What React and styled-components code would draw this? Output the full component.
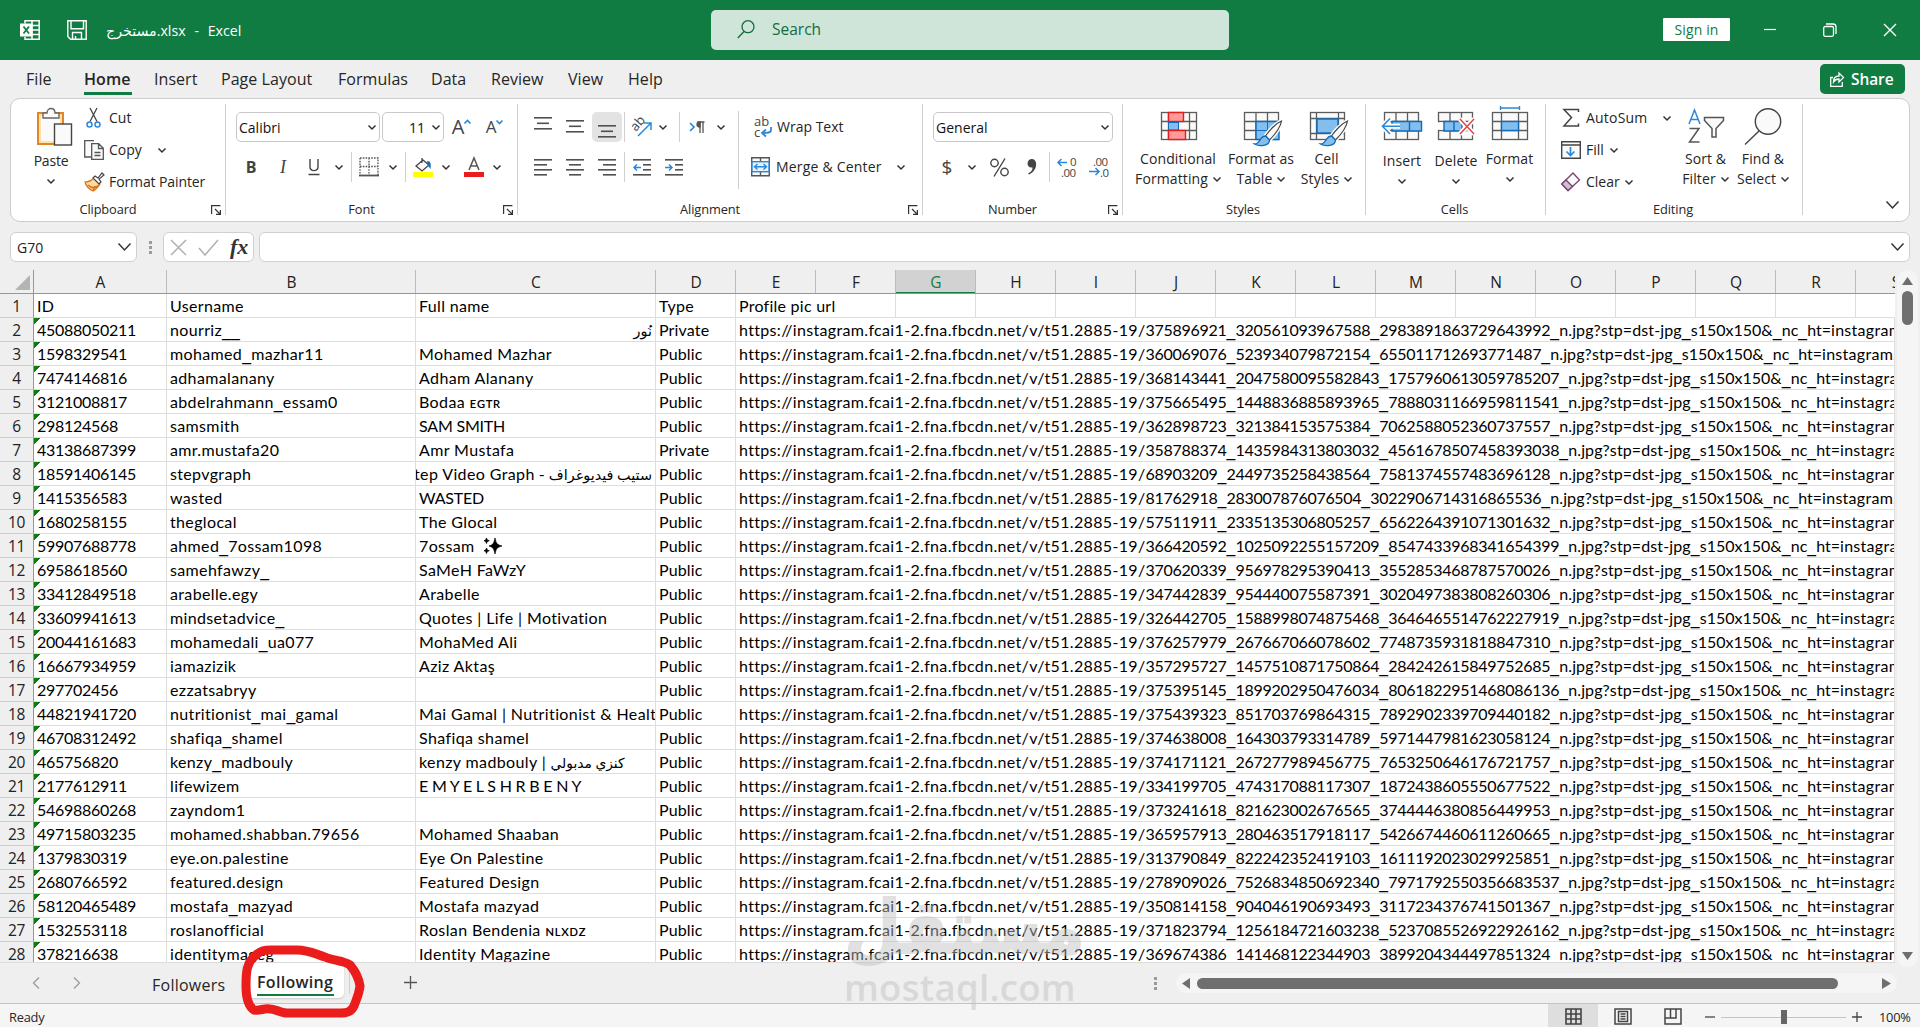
import React from "react";
import styled, { createGlobalStyle, css } from "styled-components";

const UI = `"Open Sans", "Noto Sans", "DejaVu Sans", sans-serif`;
const SHEET = `Lato, "Noto Sans", "DejaVu Sans", sans-serif`;

const GlobalStyle = createGlobalStyle`
  * {
    box-sizing: border-box;
  }

  body {
    margin: 0;
    overflow: hidden;
    background: #efefef;
    font-family: ${UI};
    font-size: 14px;
    color: #262626;
  }

  svg {
    display: block;
    flex: none;
    overflow: visible;
  }
`;

const Window = styled.div`
  position: relative;
  display: flex;
  flex-direction: column;
  width: 1920px;
  height: 1027px;
  overflow: hidden;
  background: #efefef;
`;

/* title bar */

const TitleBar = styled.header`
  display: flex;
  align-items: center;
  height: 60px;
  flex: none;
  padding-left: 20px;
  background: #107c41;
  color: #fff;
`;

const TitleIcons = styled.div`
  display: flex;
  gap: 27px;
`;

const FileName = styled.div`
  width: 605px;
  padding-left: 19px;
  font-size: 14.2px;
  white-space: pre;
  word-spacing: 0.7px;
`;

const SearchBox = styled.div`
  display: flex;
  align-items: center;
  width: 518px;
  height: 40px;
  padding: 0 0 2px 26px;
  gap: 17px;
  margin-left: 19px;
  border-radius: 5px;
  background: #cfe5da;
  color: #156b3e;
  font-size: 15.5px;
`;

const SignIn = styled.button`
  width: 67px;
  height: 23px;
  margin: 0 0 1px 434px;
  padding: 0;
  border: 0;
  border-radius: 1px;
  background: #fff;
  color: #107c41;
  font: 14px/22px ${UI};
  letter-spacing: 0.15px;
`;

const WindowButtons = styled.div`
  display: flex;
  align-items: center;
  gap: 47px;
  margin-left: 34px;
`;

/* ribbon tabs */

const TabBar = styled.nav`
  display: flex;
  align-items: flex-start;
  height: 38px;
  flex: none;
  padding: 4px 15px 0 26px;
`;

const Tab = styled.div`
  width: ${(p) => p.$w}px;
  height: 31px;
  margin-right: ${(p) => p.$gap ?? 24}px;
  font-size: 16px;
  line-height: 30px;
  letter-spacing: 0.05px;
  white-space: nowrap;
  ${(p) =>
    p.$active &&
    css`
      border-bottom: 3px solid #107c41;
      font-weight: 600;
    `}
`;

const Share = styled.button`
  display: flex;
  align-items: center;
  gap: 7px;
  width: 85px;
  height: 30px;
  margin-left: auto;
  padding: 0 0 0 10px;
  border: 0;
  border-radius: 5px;
  background: #107c41;
  color: #fff;
  font: 600 15.5px ${UI};
  letter-spacing: -0.1px;
`;

/* ribbon */

const Ribbon = styled.section`
  display: flex;
  height: 124px;
  flex: none;
  margin: 0 10px;
  padding: 5px 0;
  border: 1px solid #cdcdcd;
  border-radius: 10px;
  background: #fff;
`;

const GroupBox = styled.div`
  display: flex;
  flex-direction: column;
  width: ${(p) => p.$w}px;
  height: 111px;
  border-right: 1px solid #cfcfcf;
`;

const GroupBody = styled.div`
  display: flex;
  height: 94px;
  padding-left: ${(p) => p.$pl ?? 0}px;
`;

const Caption = styled.div`
  display: flex;
  align-items: center;
  height: 22px;
  margin-bottom: -5px;
  font-size: 12.8px;
  line-height: 22px;
  letter-spacing: -0.1px;

  span {
    flex: 1;
    padding-right: 2px;
    text-align: center;
  }

  i {
    width: 18px;
    padding: 2px 0 0 4px;
  }
`;

const Stack = styled.div`
  display: flex;
  flex-direction: column;
  width: ${(p) => p.$w}px;
  gap: 10px;
  padding-top: 8px;
`;

const SmallStack = styled.div`
  width: ${(p) => p.$w}px;
  margin: -2px 0 0 ${(p) => p.$ml ?? 0}px;
`;

const Line = styled.div`
  display: flex;
  align-items: center;
  height: ${(p) => p.$h ?? 30}px;
`;

const Tool = styled.div`
  display: flex;
  align-items: center;
  justify-content: center;
  flex: none;
  width: ${(p) => p.$w}px;
  height: 30px;
  margin-left: ${(p) => p.$ml ?? 0}px;
  border-radius: 5px;
  background: ${(p) => (p.$on ? "#e3e3e3" : "transparent")};
`;

const Rule = styled.div`
  width: 1px;
  height: ${(p) => p.$h ?? 30}px;
  margin: ${(p) => p.$mt ?? 0}px 0 0 ${(p) => p.$ml ?? 0}px;
  background: #cfcfcf;
`;

const Label = styled.div`
  width: ${(p) => p.$w}px;
  margin-left: ${(p) => p.$ml ?? 0}px;
  line-height: 20px;
  letter-spacing: ${(p) => p.$ls ?? 0}px;
  white-space: nowrap;
`;

const Combo = styled.div`
  display: flex;
  align-items: center;
  justify-content: space-between;
  width: ${(p) => p.$w}px;
  height: 30px;
  margin-right: 2px;
  padding: 0 3px 0 ${(p) => p.$pl ?? 2}px;
  border: 1px solid #c8c8c8;
  border-radius: 5px;
  color: #111;
`;

const Letter = styled.span`
  font-size: ${(p) => p.$size ?? 16}px;
  font-weight: ${(p) => p.$weight ?? 400};
  font-style: ${(p) => p.$fs ?? "normal"};
  font-family: ${(p) => p.$font ?? UI};
  line-height: 20px;
  color: #444;
`;

const BigButton = styled.div`
  display: flex;
  flex-direction: column;
  align-items: center;
  width: ${(p) => p.$w}px;
  margin-left: ${(p) => p.$ml ?? 0}px;
  line-height: 20px;
  letter-spacing: ${(p) => p.$ls ?? 0.1}px;
  white-space: nowrap;

  > div {
    display: flex;
    align-items: center;
    height: 20px;
    gap: 5px;
  }
`;

const Collapse = styled.div`
  display: flex;
  align-items: flex-end;
  margin: 0 0 7px auto;
  padding-right: 10px;
`;

/* formula bar */

const FormulaBar = styled.div`
  display: flex;
  align-items: center;
  height: 48px;
  flex: none;
  padding: 2px 10px 0;
`;

const Field = styled.div`
  display: flex;
  align-items: center;
  justify-content: ${(p) => p.$justify ?? "space-between"};
  ${(p) => (p.$w ? `width: ${p.$w}px;` : "flex: 1; margin-left: 5px;")}
  height: 30px;
  padding: 0 5px 0 6px;
  border: 1px solid #d0d0d0;
  border-radius: 6px;
  background: #fff;
  color: #222;
`;

const Dots = styled.div`
  width: 3px;
  height: 13px;
  margin: 0 ${(p) => p.$mr ?? 11}px 0 12px;
  background: repeating-linear-gradient(#9a9a9a 0 3px, transparent 3px 5px);
`;

/* sheet */

const Sheet = styled.main`
  display: flex;
  height: 693px;
  flex: none;
`;

const Grid = styled.div`
  width: 1895px;
  height: 693px;
  overflow: hidden;
  border-bottom: 1px solid #dcdcdc;
  background: #efefef;
`;

const HeadRow = styled.div`
  display: flex;
  width: 1895px;
  height: 24px;
  overflow: hidden;
  border-bottom: 1px solid #979797;
`;

const Corner = styled.div`
  width: 34px;
  flex: none;
  padding: 5px 0 0 15px;
  border-right: 1px solid #979797;
`;

const ColHead = styled.div`
  width: ${(p) => p.$w}px;
  height: 24px;
  flex: none;
  padding-left: 1px;
  border-right: 1px solid #bcbcbc;
  text-align: center;
  font-size: 15.5px;
  line-height: 24px;
  color: #222;
  ${(p) =>
    p.$selected &&
    css`
      background: #d2d2d2;
      color: #107c41;
      box-shadow: inset 0 -2px #107c41;
    `}
`;

const DataRow = styled.div`
  display: flex;
  width: 1895px;
  height: 24px;
`;

const RowHead = styled.div`
  width: 34px;
  flex: none;
  border-right: 1px solid #979797;
  border-bottom: 1px solid #cdcdcd;
  text-align: center;
  font-size: 15.5px;
  line-height: 24px;
  letter-spacing: -0.3px;
  color: #222;
`;

const Cell = styled.div`
  width: ${(p) => p.$w}px;
  height: 24px;
  flex: none;
  overflow: hidden;
  padding: 0 3px;
  border-right: 1px solid #dedede;
  border-bottom: 1px solid #dedede;
  background: #fff;
  color: #000;
  font-family: ${SHEET};
  font-size: 16px;
  line-height: 24px;
  letter-spacing: ${(p) => p.$ls ?? 0.35}px;
  white-space: pre;
  ${(p) =>
    p.$flag &&
    css`
      background: linear-gradient(135deg, #0b7d0b 4.6px, #fff 4.7px);
    `}
  ${(p) =>
    p.$spark &&
    css`
      display: flex;
      align-items: center;
      gap: 9px;
    `}
`;

const Arabic = styled.span`
  font-size: ${(p) => p.$size}px;
  letter-spacing: 0;
`;

/* underscore as wide as a digit */
const Under = styled.span`
  font-family: "DejaVu Sans", sans-serif;
  font-size: 17.5px;
  line-height: 0;
  letter-spacing: 0.25px;
`;

const VScroll = styled.div`
  display: flex;
  flex-direction: column;
  align-items: center;
  width: 21px;
  height: 697px;
  margin-left: 2px;
  padding: 7px 0;
  border-radius: 10px;
  background: #f5f5f5;
`;

const VThumb = styled.div`
  width: 11px;
  height: 34px;
  margin: 6px 0 auto;
  border-radius: 6px;
  background: #6f6f6f;
`;

const HThumb = styled(VThumb)`
  width: 641px;
  height: 11px;
  margin: 0 auto 0 7px;
`;

/* sheet tabs */

const SheetBar = styled.div`
  display: flex;
  align-items: center;
  height: 41px;
  flex: none;
  padding: 0 23px 0 32px;
  border-bottom: 1px solid #c4c4c4;
`;

const SheetTab = styled.div`
  height: 35px;
  margin: 0 0 6px ${(p) => p.$ml}px;
  padding: 0 10px 0 14px;
  font-size: 16px;
  line-height: ${(p) => (p.$active ? 38 : 44)}px;
  ${(p) =>
    p.$active &&
    css`
      width: 101px;
      border-radius: 0 0 5px 5px;
      background: #fff;
      box-shadow: 0 1px 2px #c8c8c8;
      font-weight: 600;
    `}

  span {
    display: block;
    height: 33px;
    width: ${(p) => p.$tw}px;
    letter-spacing: ${(p) => p.$ls}px;
    border-bottom: ${(p) => (p.$active ? "2px solid #107c41" : "0")};
  }
`;

const AddSheet = styled.div`
  margin: 0 auto 2px 54px;
`;

const HScroll = styled.div`
  display: flex;
  align-items: center;
  justify-content: space-between;
  width: 721px;
  height: 20px;
  padding: 0 6px;
  border-radius: 10px;
  background: #f5f5f5;
`;

const StatusBar = styled.footer`
  display: flex;
  align-items: center;
  height: 23px;
  flex: none;
  padding-left: 9px;
  background: #f5f5f5;
  font-size: 12.8px;
  letter-spacing: -0.2px;

  > span {
    padding-top: 3px;
  }
`;

const StatusViews = styled.div`
  display: flex;
  align-items: center;
  margin-left: auto;
  padding-right: 10px;
`;

const View = styled.div`
  display: flex;
  justify-content: center;
  align-items: center;
  width: 50px;
  height: 23px;
  padding-top: 2px;
  background: ${(p) => (p.$on ? "#dedede" : "transparent")};
`;

const ZoomOut = styled.div`
  padding: 2px 0 0 7px;
`;

const ZoomTrack = styled.div`
  display: flex;
  align-items: center;
  justify-content: center;
  width: 125px;
  height: 23px;
  margin: 0 6px;
  background: linear-gradient(#c4c4c4, #c4c4c4) 0 13px / 125px 1px no-repeat;
`;

const ZoomText = styled.div`
  width: 31px;
  margin-left: 17px;
  padding-top: 3px;
`;

const Overlay = styled.svg`
  position: absolute;
  left: 236px;
  top: 940px;
`;

const Watermark = styled.div`
  position: absolute;
  left: 844px;
  top: 880px;
  width: 230px;
  height: 130px;
  color: #bebebe;
  opacity: 0.45;
  white-space: nowrap;
`;

const MarkArabic = styled.div`
  width: max-content;
  font: bold 74px/94px "DejaVu Sans", sans-serif;
  -webkit-text-stroke: 2px #bebebe;
  transform: scaleX(0.89);
  transform-origin: 0 0;
`;

const MarkLatin = styled.div`
  margin-top: -7px;
  font: 600 36.5px/40px ${UI};
  letter-spacing: 0.3px;
`;

const Chevron = ({ w = 8, h = 4 }) => (
  <svg width={w} height={h + 1} fill="none" stroke="#333" strokeWidth="1.5">
    <path d={`M0.5 0.5 L${w / 2} ${h} L${w - 0.5} 0.5`} />
  </svg>
);

const Launcher = () => (
  <svg width="10" height="10" fill="none" stroke="#333" strokeWidth="1.2">
    <path d="M0.6 9V0.6H9.4M4 4l5 5M9.4 5v4.4H5" />
  </svg>
);

/* horizontal bars; each entry is [x, y, width] */
const Bars = ({ bars, h = 18, children }) => (
  <svg width="18" height={h}>
    {bars.map(([x, y, w]) => (
      <rect key={y} x={x} y={y} width={w} height="1.6" fill="#505050" />
    ))}
    {children}
  </svg>
);

const Group = ({ title, w, pl, launcher, children }) => (
  <GroupBox $w={w}>
    <GroupBody $pl={pl}>{children}</GroupBody>
    <Caption>
      <span>{title}</span>
      {launcher && (
        <i>
          <Launcher />
        </i>
      )}
    </Caption>
  </GroupBox>
);

const Brush = ({ x, y }) => (
  <g transform={`translate(${x} ${y})`}>
    <path d="M27 0c-5 2-12 9-16 15l4 4c5-5 11-13 12-19z" fill="#fff" stroke="#fff" strokeWidth="4" />
    <path d="M27 0c-5 2-12 9-16 15l4 4c5-5 11-13 12-19z" fill="#fafafa" stroke="#444" strokeWidth="1.2" />
    <path d="M11 15c-6 0-5 8-11 8 5 3 15 2 15-4z" fill="#83beec" stroke="#0f6cbd" strokeWidth="1.3" />
  </g>
);

const TableGrid = ({ x, y, w, h, cols, rows }) => (
  <g fill="none" stroke="#5c5c5c" strokeWidth="1.3">
    <rect x={x} y={y} width={w} height={h} fill="#fafafa" />
    {cols.map((c) => (
      <path key={c} d={`M${x + c} ${y}v${h}`} />
    ))}
    {rows.map((r) => (
      <path key={r} d={`M${x} ${y + r}h${w}`} />
    ))}
  </g>
);

const Clipboard = () => (
  <Group title="Clipboard" w={215} launcher>
    <BigButton $w={40} $ml={20} $ls={-0.2}>
      <svg width="28" height="47" fill="none" strokeWidth="1.4">
        <rect x="1" y="9" width="25" height="31" fill="#ffe2a8" stroke="#e0852a" strokeWidth="2" />
        <rect x="4" y="12" width="19" height="25" fill="#fafafa" />
        <path d="M6 14V9h4c0-6 8-6 8 0h4v5z" fill="#fafafa" stroke="#666" />
        <rect x="17.500" y="20" width="17" height="21" fill="#fafafa" stroke="#444" />
      </svg>
      <div>Paste</div>
      <div>
        <Chevron />
      </div>
    </BigButton>
    <SmallStack $w={130} $ml={13}>
      <Line $h={32}>
        <svg width="20" height="20" fill="none" strokeWidth="1.3">
          <path d="M6 0l7 13.500M13 0L6 13.500" stroke="#444" />
          <circle cx="5.500" cy="16.500" r="2.500" stroke="#2b88d8" strokeWidth="1.5" />
          <circle cx="13.500" cy="16.500" r="2.500" stroke="#2b88d8" strokeWidth="1.5" />
        </svg>
        <Label $ml={5}>Cut</Label>
      </Line>
      <Line $h={32}>
        <svg width="20" height="20" fill="#fafafa" stroke="#555" strokeWidth="1.3">
          <path d="M7 17H0.700V0.700H10" />
          <path d="M7.700 3.700h7l4.600 4.600v11h-11.600zM14.500 4v4.500H19M10.500 12.500h6M10.500 15.500h6" />
        </svg>
        <Label $ml={5} $w={49}>
          Copy
        </Label>
        <Chevron />
      </Line>
      <Line $h={32}>
        <svg width="20" height="20" strokeWidth="1.2">
          <path d="M1 10c3 0 6-1 9-4l6 6c-2 3-4 6-7 7-4-2-7-5-8-9z" fill="#fcd9a0" stroke="#d9731a" />
          <path d="M4 13c3 3 8 4 11 0M9 19l2-5" fill="none" stroke="#d9731a" strokeWidth="1.6" />
          <path d="M9 6l2-2 3 2 4-5 2 2-5 4 2 3-2 2z" fill="#fafafa" stroke="#444" />
        </svg>
        <Label $ml={5} $ls={-0.1}>
          Format Painter
        </Label>
      </Line>
    </SmallStack>
  </Group>
);

const FontGroup = () => (
  <Group title="Font" w={292} pl={10} launcher>
    <Stack>
      <Line>
        <Combo $w={144}>
          Calibri
          <Chevron />
        </Combo>
        <Combo $w={62} $pl={26}>
          11
          <Chevron />
        </Combo>
        <Tool $w={21} $ml={5}>
          <Letter $size={20}>A</Letter>
          <svg width="7" height="22" fill="none" stroke="#2b88d8" strokeWidth="1.6">
            <path d="M0.500 7.500l3-3 3 3" />
          </svg>
        </Tool>
        <Tool $w={19} $ml={13}>
          <Letter $size={17}>A</Letter>
          <svg width="7" height="22" fill="none" stroke="#2b88d8" strokeWidth="1.6">
            <path d="M0.500 4.500l3 3 3-3" />
          </svg>
        </Tool>
      </Line>
      <Line>
        <Tool $w={14} $ml={8}>
          <Letter $weight={700}>B</Letter>
        </Tool>
        <Tool $w={14} $ml={18}>
          <Letter $fs="italic" $size={18} $font={`"Liberation Serif", serif`}>
            I
          </Letter>
        </Tool>
        <Tool $w={14} $ml={17}>
          <svg width="12" height="18" fill="none" stroke="#444" strokeWidth="1.4">
            <path d="M2 1v7.500c0 5.500 8 5.500 8 0V1M0.500 16.500h11" />
          </svg>
        </Tool>
        <Tool $w={8} $ml={14}>
          <Chevron />
        </Tool>
        <Rule $ml={8} />
        <Tool $w={20} $ml={7}>
          <svg width="20" height="20" fill="none" stroke="#555" strokeWidth="1.3">
            <path d="M1 1h18v17M1 1v17M10 1v17M1 9.500h18" strokeDasharray="1.6 1.2" />
            <path d="M0 18.500h20" strokeWidth="1.8" />
          </svg>
        </Tool>
        <Tool $w={8} $ml={10}>
          <Chevron />
        </Tool>
        <Rule $ml={8} />
        <Tool $w={20} $ml={7}>
          <svg width="20" height="20">
            <path d="M9 1v5M10 3l6 5-7 6-6-5z" fill="#fafafa" stroke="#444" strokeWidth="1.3" />
            <path d="M14 4c4 0 4 3 3.500 8l-3-4z" fill="#0f6cbd" />
            <rect y="15" width="20" height="5" fill="#ffff00" />
          </svg>
        </Tool>
        <Tool $w={8} $ml={9}>
          <Chevron />
        </Tool>
        <Tool $w={20} $ml={14}>
          <svg width="20" height="20">
            <path d="M5 13L10 1l5 12M6.500 9h7" fill="none" stroke="#555" strokeWidth="1.5" />
            <rect y="15" width="20" height="5" fill="#ea1c1c" />
          </svg>
        </Tool>
        <Tool $w={8} $ml={9}>
          <Chevron />
        </Tool>
      </Line>
    </Stack>
  </Group>
);

const Alignment = () => (
  <Group title="Alignment" w={405} pl={14} launcher>
    <Stack $w={206}>
      <Line>
        <Tool $w={22}>
          <Bars bars={[[0, 0, 18], [3, 5.500, 12], [0, 11, 18]]} h={20} />
        </Tool>
        <Tool $w={22} $ml={10}>
          <Bars bars={[[0, 3, 18], [3, 8.500, 12], [0, 14, 18]]} h={20} />
        </Tool>
        <Tool $w={30} $ml={6} $on>
          <Bars bars={[[0, 8, 18], [3, 13.500, 12], [0, 19, 18]]} h={20} />
        </Tool>
        <Rule $ml={2} />
        <Tool $w={22} $ml={6}>
          <svg width="22" height="20">
            <text x="0" y="0" transform="translate(5 15) rotate(-50)" fontSize="13" fill="#444">
              ab
            </text>
            <path d="M7 19L20 6M13 6h7v7" fill="none" stroke="#2b88d8" strokeWidth="1.5" />
          </svg>
        </Tool>
        <Tool $w={8} $ml={6}>
          <Chevron />
        </Tool>
        <Rule $ml={12} />
        <Tool $w={16} $ml={9}>
          <svg width="16" height="14" fill="none" stroke="#555" strokeWidth="1.3">
            <path d="M1 3l4 4-4 4" stroke="#2b88d8" strokeWidth="1.7" />
            <path d="M8.500 2h7M11 2v11M14 2v11" />
            <path d="M11 2c-4 0-4 5 0 5z" fill="#555" />
          </svg>
        </Tool>
        <Tool $w={8} $ml={12}>
          <Chevron />
        </Tool>
      </Line>
      <Line>
        <Tool $w={22}>
          <Bars bars={[[0, 0, 18], [0, 5, 13], [0, 10, 18], [0, 15, 13]]} h={17} />
        </Tool>
        <Tool $w={22} $ml={10}>
          <Bars bars={[[0, 0, 18], [3, 5, 12], [0, 10, 18], [3, 15, 12]]} h={17} />
        </Tool>
        <Tool $w={22} $ml={10}>
          <Bars bars={[[0, 0, 18], [5, 5, 13], [0, 10, 18], [5, 15, 13]]} h={17} />
        </Tool>
        <Rule $ml={6} />
        <Tool $w={20} $ml={7}>
          <Bars bars={[[0, 0, 18], [10, 5, 8], [10, 10, 8], [0, 15, 18]]} h={17}>
            <path d="M8 8.500H1M4 5.500l-3 3 3 3" fill="none" stroke="#2b88d8" strokeWidth="1.5" />
          </Bars>
        </Tool>
        <Tool $w={20} $ml={12}>
          <Bars bars={[[0, 0, 18], [10, 5, 8], [10, 10, 8], [0, 15, 18]]} h={17}>
            <path d="M0 8.500h7M4 5.500l3 3-3 3" fill="none" stroke="#2b88d8" strokeWidth="1.5" />
          </Bars>
        </Tool>
      </Line>
    </Stack>
    <Rule $h={78} $mt={7} />
    <Stack>
      <Line>
        <Tool $w={20} $ml={14}>
          <svg width="18" height="22" fill="#444" fontSize="13">
            <text x="0" y="10">
              ab
            </text>
            <text x="0" y="21">
              c
            </text>
            <path d="M17 11v3c0 3-4 3-8 3M12 13.500l-4 3.500 4 3.500" fill="none" stroke="#2b88d8" strokeWidth="1.8" />
          </svg>
        </Tool>
        <Label $ml={4}>Wrap Text</Label>
      </Line>
      <Line>
        <Tool $w={20} $ml={11}>
          <svg width="19" height="20" fill="#fafafa" stroke="#555" strokeWidth="1.4">
            <path d="M0.700 0.700h17.600v18H0.700zM9.500 0.700v18" />
            <rect x="1" y="4.700" width="17" height="10" fill="#e6f2fb" stroke="#2b88d8" />
            <path d="M3.500 9.700h12M6.500 7l-3 2.700 3 2.700M12.500 7l3 2.700-3 2.700" fill="none" stroke="#2b88d8" />
          </svg>
        </Tool>
        <Label $ml={6} $w={121} $ls={0.2}>
          Merge &amp; Center
        </Label>
        <Chevron />
      </Line>
    </Stack>
  </Group>
);

const NumberGroup = () => (
  <Group title="Number" w={200} pl={10} launcher>
    <Stack>
      <Line>
        <Combo $w={180}>
          General
          <Chevron />
        </Combo>
      </Line>
      <Line>
        <Tool $w={12} $ml={8}>
          <Letter $size={19}>$</Letter>
        </Tool>
        <Tool $w={8} $ml={15}>
          <Chevron />
        </Tool>
        <Tool $w={20} $ml={13}>
          <svg width="19" height="19" fill="none" stroke="#444" strokeWidth="1.4">
            <circle cx="4.500" cy="5" r="3.700" />
            <circle cx="14.500" cy="14" r="3.700" />
            <path d="M15 0.500L4 18.500" />
          </svg>
        </Tool>
        <Tool $w={10} $ml={18}>
          <svg width="10" height="17" fill="#444">
            <path d="M5 0c6 0 6 12-3 15.500l-1-1c4-2 4.500-4 4.500-6C-1 9.500-1 0 5 0z" />
          </svg>
        </Tool>
        <Rule $ml={12} />
        <Tool $w={20} $ml={7}>
          <svg width="20" height="20" fontSize="11.500" fill="#444" letterSpacing="-0.5">
            <path d="M10 5.500H1M4.500 2L1 5.500 4.500 9" fill="none" stroke="#2b88d8" strokeWidth="1.5" />
            <text x="13" y="9">
              0
            </text>
            <text x="4" y="20">
              .00
            </text>
          </svg>
        </Tool>
        <Tool $w={20} $ml={12}>
          <svg width="20" height="20" fontSize="11.500" fill="#444" letterSpacing="-0.5">
            <text x="4" y="9">
              .00
            </text>
            <path d="M0 14.500h10M6.500 11l3.500 3.500L6.500 18" fill="none" stroke="#2b88d8" strokeWidth="1.5" />
            <text x="11" y="20">
              .0
            </text>
          </svg>
        </Tool>
      </Line>
    </Stack>
  </Group>
);

const Styles = () => (
  <Group title="Styles" w={243} pl={9}>
    <BigButton $w={92}>
      <svg width="34" height="45">
        <TableGrid x={0.5} y={8.5} w={35} h={27} cols={[7, 28]} rows={[9, 18]} />
        <rect x="7.500" y="8.500" width="15" height="9" fill="#ff9a9a" stroke="#e31b1b" strokeWidth="1.4" />
        <rect x="7.500" y="18.500" width="10" height="7.500" fill="#83beec" stroke="#0f6cbd" />
        <rect x="7.500" y="26.500" width="17" height="9" fill="#ff9a9a" stroke="#e31b1b" strokeWidth="1.4" />
      </svg>
      <div>Conditional</div>
      <div>
        Formatting <Chevron />
      </div>
    </BigButton>
    <BigButton $w={74}>
      <svg width="34" height="45">
        <TableGrid x={0.5} y={8.5} w={34} h={27} cols={[11.5, 23]} rows={[9, 18]} />
        <path d="M12 17.500h23v18H12z" fill="#83beec" stroke="#0f6cbd" strokeWidth="1.4" />
        <path d="M12 26.500h23M23.500 17.500v18" stroke="#0f6cbd" />
        <Brush x={10.5} y={17} />
      </svg>
      <div>Format as</div>
      <div>
        Table <Chevron />
      </div>
    </BigButton>
    <BigButton $w={57}>
      <svg width="34" height="45">
        <TableGrid x={0.5} y={8.5} w={34} h={27} cols={[6, 28]} rows={[6, 21]} />
        <rect x="7" y="15" width="21" height="14" fill="#83beec" stroke="#0f6cbd" strokeWidth="1.4" />
        <Brush x={10.5} y={17} />
      </svg>
      <div>Cell</div>
      <div>
        Styles <Chevron />
      </div>
    </BigButton>
  </Group>
);

const Cells = () => (
  <Group title="Cells" w={180} pl={11}>
    <BigButton $w={50}>
      <svg width="36" height="47">
        <TableGrid x={0.5} y={8.5} w={34} h={27} cols={[11.5, 23]} rows={[9, 18]} />
        <path d="M8 17.500h29.500v9.500H8zM25.500 17.500v9.500" fill="#83beec" stroke="#0f6cbd" strokeWidth="1.4" />
        <path d="M16 22.300H-1M6 14.500l-7.500 7.800L6 30" fill="none" stroke="#fff" strokeWidth="5" />
        <path d="M16 22.300H-1M6 14.500l-7.500 7.800L6 30" fill="none" stroke="#2b88d8" strokeWidth="1.6" />
      </svg>
      <div>Insert</div>
      <div>
        <Chevron />
      </div>
    </BigButton>
    <BigButton $w={58}>
      <svg width="36" height="47">
        <TableGrid x={0.5} y={8.5} w={34} h={27} cols={[11.5, 23]} rows={[9, 18]} />
        <path d="M-1 18.300h6v7.500h-6z" fill="#fff" />
        <path d="M6 17.500h18v9.500H6zM16 17.500v9.500" fill="#83beec" stroke="#0f6cbd" strokeWidth="1.4" />
        <path d="M22 15l14 15M36 15L22 30" stroke="#fff" strokeWidth="5" />
        <path d="M22 15l14 15M36 15L22 30" stroke="#e8423f" strokeWidth="1.5" />
      </svg>
      <div>Delete</div>
      <div>
        <Chevron />
      </div>
    </BigButton>
    <BigButton $w={49}>
      <svg width="36" height="45">
        <TableGrid x={0.5} y={8.5} w={35} h={27} cols={[9, 26]} rows={[9, 18]} />
        <rect x="9.500" y="17.500" width="17" height="9" fill="#83beec" stroke="#0f6cbd" strokeWidth="1.4" />
        <path d="M8.500 4h19M8.500 2v4M27.500 2v4" stroke="#2b88d8" strokeWidth="1.4" />
      </svg>
      <div>Format</div>
      <div>
        <Chevron />
      </div>
    </BigButton>
  </Group>
);

const Editing = () => (
  <Group title="Editing" w={257} pl={15}>
    <SmallStack $w={119}>
      <Line $h={32}>
        <svg width="20" height="20" fill="none" stroke="#444" strokeWidth="1.5">
          <path d="M17.500 4V1.500H3l7.500 8L3 18h14.500v-2.500" />
        </svg>
        <Label $ml={5} $w={77} $ls={0.2}>
          AutoSum
        </Label>
        <Chevron />
      </Line>
      <Line $h={32}>
        <svg width="20" height="18" fill="#fafafa" stroke="#444" strokeWidth="1.4">
          <path d="M0.700 0.700h18.600v16.600H0.700zM0.700 4h18.600" />
          <path d="M9.500 6v8.500M5.500 10.500l4 4 4-4" fill="none" stroke="#2b88d8" strokeWidth="1.7" />
        </svg>
        <Label $ml={5} $w={24}>
          Fill
        </Label>
        <Chevron />
      </Line>
      <Line $h={32}>
        <svg width="20" height="20" fill="#fafafa" stroke="#7b3f73" strokeWidth="1.3">
          <path d="M12 1l6.500 7L7 18.500 0.800 12z" />
          <path d="M5 8l6.500 6.500L7 18.500 0.800 12z" fill="#c9c3c8" />
        </svg>
        <Label $ml={5} $w={39}>
          Clear
        </Label>
        <Chevron />
      </Line>
    </SmallStack>
    <BigButton $w={51}>
      <svg width="34" height="45" fill="none" strokeWidth="1.5">
        <path d="M0 20L5.500 6 11 20M2 15.500h7" stroke="#2b88d8" />
        <path d="M0.500 24.500h9.500L0.500 38h10" stroke="#555" />
        <path d="M15.500 13.500h19v3l-7.500 8v8.500h-4v-8.500l-7.500-8z" fill="#fafafa" stroke="#555" />
      </svg>
      <div>Sort &amp;</div>
      <div>
        Filter <Chevron />
      </div>
    </BigButton>
    <BigButton $w={58} $ml={3}>
      <svg width="38" height="45" fill="#fafafa" stroke="#444" strokeWidth="1.4">
        <circle cx="24" cy="17.500" r="12.700" />
        <path d="M15 27L1 40.500" />
      </svg>
      <div>Find &amp;</div>
      <div>
        Select <Chevron />
      </div>
    </BigButton>
  </Group>
);

const columns = [
  ["A", 133], ["B", 249], ["C", 240], ["D", 80], ["E", 80], ["F", 80],
  ["G", 80], ["H", 80], ["I", 80], ["J", 80], ["K", 80], ["L", 80],
  ["M", 80], ["N", 80], ["O", 80], ["P", 80], ["Q", 80], ["R", 80], ["S", 80],
];

const rows = [
  ["45088050211", "nourriz__", "نُور", "Private", "375896921_320561093967588_2983891863729643992"],
  ["1598329541", "mohamed_mazhar11", "Mohamed Mazhar", "Public", "360069076_523934079872154_655011712693771487"],
  ["7474146816", "adhamalanany", "Adham Alanany", "Public", "368143441_2047580095582843_1757960613059785207"],
  ["3121008817", "abdelrahmann_essam0", "Bodaa ᴇɢᴛʀ", "Public", "375665495_1448836885893965_7888031166959811541"],
  ["298124568", "samsmith", "SAM SMITH", "Public", "362898723_321384153575384_7062588052360737557"],
  ["43138687399", "amr.mustafa20", "Amr Mustafa", "Private", "358788374_1435984313803032_4561678507458393038"],
  ["18591406145", "stepvgraph", "ستيب فيديوغراف - Step Video Graph", "Public", "68903209_2449735258438564_7581374557483696128"],
  ["1415356583", "wasted", "WASTED", "Public", "81762918_283007876076504_3022906714316865536"],
  ["1680258155", "theglocal", "The Glocal", "Public", "57511911_2335135306805257_6562264391071301632"],
  ["59907688778", "ahmed_7ossam1098", "7ossam", "Public", "366420592_1025092255157209_8547433968341654399"],
  ["6958618560", "samehfawzy_", "SaMeH FaWzY", "Public", "370620339_956978295390413_3552853468787570026"],
  ["33412849518", "arabelle.egy", "Arabelle", "Public", "347442839_954440075587391_3020497383808260306"],
  ["33609941613", "mindsetadvice_", "Quotes | Life | Motivation", "Public", "326442705_1588998074875468_3646465514762227919"],
  ["20044161683", "mohamedali_ua077", "MohaMed Ali", "Public", "376257979_267667066078602_7748735931818847310"],
  ["16667934959", "iamazizik", "Aziz Aktaş", "Public", "357295727_1457510871750864_284242615849752685"],
  ["297702456", "ezzatsabryy", "", "Public", "375395145_1899202950476034_8061822951468086136"],
  ["44821941720", "nutritionist_mai_gamal", "Mai Gamal | Nutritionist & Health", "Public", "375439323_851703769864315_7892902339709440182"],
  ["46708312492", "shafiqa_shamel", "Shafiqa shamel", "Public", "374638008_164303793314789_5971447981623058124"],
  ["465756820", "kenzy_madbouly", "kenzy madbouly | كنزي مدبولي", "Public", "374171121_267277989456775_7653250646176721757"],
  ["2177612911", "lifewizem", "E M Y E L S H R B E N Y", "Public", "334199705_474317088117307_1872438605550677522"],
  ["54698860268", "zayndom1", "", "Public", "373241618_821623002676565_3744446380856449953"],
  ["49715803235", "mohamed.shabban.79656", "Mohamed Shaaban", "Public", "365957913_280463517918117_5426674460611260665"],
  ["1379830319", "eye.on.palestine", "Eye On Palestine", "Public", "313790849_822242352419103_1611192023029925851"],
  ["2680766592", "featured.design", "Featured Design", "Public", "278909026_7526834850692340_7971792550356683537"],
  ["58120465489", "mostafa_mazyad", "Mostafa mazyad", "Public", "350814158_904046190693493_3117234376741501367"],
  ["1532553118", "roslanofficial", "Roslan Bendenia ɴʟxᴅᴢ", "Public", "371823794_1256184721603238_5237085526922926162"],
  ["378216638", "identitymageg", "Identity Magazine", "Public", "369674386_141468122344903_3899204344497851324"],
];

const isArabic = (text) => /^[\u0600-\u06ff]/.test(text);
const isCaps = (text) => /^[A-Z ]+$/.test(text);

const Spaced = ({ text }) =>
  text.split(/(_)/).map((part, i) => (part === "_" ? <Under key={i}>_</Under> : part));

/* Arabic runs are set a little smaller than the Latin ones */
const Name = ({ text }) =>
  text
    .split(/([\u0600-\u06ff][\u0600-\u06ff ]*[\u0600-\u06ff])/)
    .map((part, i) =>
      isArabic(part) ? (
        <Arabic key={i} $size={text.startsWith("kenzy") ? 13.8 : 14.4}>
          {part}
        </Arabic>
      ) : (
        part
      )
    );

const ctx = document.createElement("canvas").getContext("2d");

/* spreads a run of text over a given width */
function Run({ text, width }) {
  ctx.font = "16px Lato";
  const spacing = (width - ctx.measureText(text).width) / text.length;
  return <span style={{ letterSpacing: `${spacing}px` }}>{text}</span>;
}

const Url = ({ pic }) => (
  <>
    <Run text="https://instagram.fcai1-2.fna.fbcdn.net/v/t51.2885-19/" width={406} />
    {pic.split(/(_)/).map((part, i) =>
      part === "_" ? <Under key={i}>_</Under> : <Run key={i} text={part} width={part.length * 8.993} />
    )}
    <Under>_</Under>
    <Run text="n.jpg?stp=dst-jpg" width={122.5} />
    <Under>_</Under>
    <Run text="s150x150&" width={82} />
    <Under>_</Under>
    <Run text="nc" width={16.6} />
    <Under>_</Under>
    <Run text="ht=" width={23.7} />
    <Run text="instagram.f" width={81} />
  </>
);

const Sparkles = () => (
  <svg width="18" height="18">
    <path d="M11 1c1 5 2 7 7 8-5 1-6 3-7 8-1-5-2-7-6-8 4-1 5-3 6-8zM2.500 1l.8 2 2 .7-2 .8-.8 2-.8-2L0 3.700 1.700 3zM2.500 11l.8 2 2 .7-2 .8-.8 2-.8-2-1.700-.8 1.700-.7z" fill="#000" stroke="#000" strokeWidth="0.7" />
  </svg>
);

function SheetGrid() {
  return (
    <Grid>
      <HeadRow>
        <Corner>
          <svg width="15" height="15">
            <path d="M15 0v15H0z" fill="#b4b4b4" />
          </svg>
        </Corner>
        {columns.map(([name, w]) => (
          <ColHead key={name} $w={w} $selected={name === "G"}>
            {name}
          </ColHead>
        ))}
      </HeadRow>
      <DataRow>
        <RowHead>1</RowHead>
        <Cell $w={133}>ID</Cell>
        <Cell $w={249}>Username</Cell>
        <Cell $w={240}>Full name</Cell>
        <Cell $w={80}>Type</Cell>
        <Cell $w={160} $ls={0.25}>Profile pic url</Cell>
        {columns.slice(6).map(([name, w]) => (
          <Cell key={name} $w={w} />
        ))}
      </DataRow>
      {rows.map(([id, username, fullName, type, pic], i) => (
        <DataRow key={id}>
          <RowHead>{i + 2}</RowHead>
          <Cell $w={133} $ls={-0.28} $flag>
            {id}
          </Cell>
          <Cell $w={249}>
            <Spaced text={username} />
          </Cell>
          <Cell
            $w={240}
            $ls={isCaps(fullName) ? -0.2 : 0.38}
            $spark={fullName === "7ossam"}
            dir={isArabic(fullName) ? "rtl" : "ltr"}
          >
            <Name text={fullName} />
            {fullName === "7ossam" && <Sparkles />}
          </Cell>
          <Cell $w={80} $ls={0.15}>
            {type}
          </Cell>
          <Cell $w={1159}>
            <Url pic={pic} />
          </Cell>
        </DataRow>
      ))}
    </Grid>
  );
}

function App() {
  return (
    <Window>
      <GlobalStyle />
      <TitleBar>
        <TitleIcons>
          <svg width="20" height="20" fill="none" stroke="#fff" strokeWidth="1.5">
            <path d="M5 3.500V0.800h14.200v18.400H5v-2.500M12 0.800v18.400M12 5.500h7M12 10h7M12 14.500h7" />
            <rect x="0" y="3.500" width="12.500" height="13" fill="#fff" stroke="none" />
            <path d="M3.500 6.500l5.500 7M9 6.500l-5.500 7" stroke="#107c41" strokeWidth="1.8" />
          </svg>
          <svg width="20" height="20" fill="none" stroke="#fff" strokeWidth="1.4">
            <path d="M0.800 0.800h18.400v18.400H3.500L0.800 16.500zM4 0.800v8h12.500v-8M5.500 19v-6.500h9V19M8.500 19v-3" />
          </svg>
        </TitleIcons>
        <FileName dir="ltr">{"مستخرج\u200e.xlsx  -  Excel"}</FileName>
        <SearchBox>
          <svg width="18" height="18" fill="none" stroke="#156b3e" strokeWidth="1.3">
            <circle cx="11" cy="6.700" r="6" />
            <path d="M7 11.500L0.800 18" />
          </svg>
          Search
        </SearchBox>
        <SignIn>Sign in</SignIn>
        <WindowButtons>
          <svg width="12" height="12">
            <path d="M0 5.500h12" stroke="#fff" strokeWidth="1.2" />
          </svg>
          <svg width="14" height="14" fill="none" stroke="#fff" strokeWidth="1.3">
            <rect x="0.700" y="3.500" width="9.800" height="9.800" rx="1.500" />
            <path d="M3 1h7c2 0 3 1 3 3v7" />
          </svg>
          <svg width="12" height="12">
            <path d="M0 0l12 12M12 0L0 12" stroke="#fff" strokeWidth="1.4" />
          </svg>
        </WindowButtons>
      </TitleBar>

      <TabBar>
        <Tab $w={26} $gap={32}>File</Tab>
        <Tab $w={48} $gap={22} $active>Home</Tab>
        <Tab $w={43}>Insert</Tab>
        <Tab $w={93}>Page Layout</Tab>
        <Tab $w={69}>Formulas</Tab>
        <Tab $w={36}>Data</Tab>
        <Tab $w={53}>Review</Tab>
        <Tab $w={37} $gap={23}>View</Tab>
        <Tab $w={36}>Help</Tab>
        <Share>
          <svg width="14" height="15" fill="none" stroke="#fff" strokeWidth="1.3">
            <path d="M3 5.500H0.700v8.800h11.600V10" />
            <path d="M3.500 10c0-4 2-6 5.500-6V1l4.500 4.500L9 10V7c-2.500 0-4 .5-5.500 3z" />
          </svg>
          Share
        </Share>
      </TabBar>

      <Ribbon>
        <Clipboard />
        <FontGroup />
        <Alignment />
        <NumberGroup />
        <Styles />
        <Cells />
        <Editing />
        <Collapse>
          <Chevron w={13} h={7} />
        </Collapse>
      </Ribbon>

      <FormulaBar>
        <Field $w={127}>
          G70
          <Chevron w={13} h={7} />
        </Field>
        <Dots />
        <Field $w={91} $justify="flex-start">
          <svg width="78" height="22" fill="none" stroke="#b0b0b0" strokeWidth="1.5">
            <path d="M1 4l15 15M16 4L1 19M29 12l6 7L48 4" />
            <text x="60" y="18" fill="#333" stroke="none" fontFamily="Liberation Serif, serif" fontStyle="italic" fontWeight="700" fontSize="22">
              fx
            </text>
          </svg>
        </Field>
        <Field $justify="flex-end">
          <Chevron w={13} h={7} />
        </Field>
      </FormulaBar>

      <Sheet>
        <SheetGrid />
        <VScroll>
          <svg width="11" height="8">
            <path d="M5.500 0L11 8H0z" fill="#6f6f6f" />
          </svg>
          <VThumb />
          <svg width="11" height="8">
            <path d="M0 0h11L5.500 8z" fill="#6f6f6f" />
          </svg>
        </VScroll>
      </Sheet>

      <SheetBar>
        <svg width="49" height="12" fill="none" stroke="#9c9c9c" strokeWidth="1.3">
          <path d="M7 0.500L1.500 6 7 11.500M42 0.500L47.500 6 42 11.500" />
        </svg>
        <SheetTab $ml={57} $tw={73} $ls={0.25}>
          <span>Followers</span>
        </SheetTab>
        <SheetTab $ml={8} $tw={77} $ls={0.3} $active>
          <span>Following</span>
        </SheetTab>
        <Rule $ml={5} $h={22} />
        <AddSheet>
          <svg width="13" height="13" stroke="#555" strokeWidth="1.3">
            <path d="M6.500 0v13M0 6.500h13" />
          </svg>
        </AddSheet>
        <Dots $mr={19} />
        <HScroll>
          <svg width="8" height="11">
            <path d="M8 0v11L0 5.500z" fill="#6f6f6f" />
          </svg>
          <HThumb />
          <svg width="9" height="11">
            <path d="M0 0v11L9 5.500z" fill="#6f6f6f" />
          </svg>
        </HScroll>
      </SheetBar>

      <StatusBar>
        <span>Ready</span>
        <StatusViews>
          <View $on>
            <svg width="17" height="17" fill="none" stroke="#444" strokeWidth="1.6">
              <path d="M1 1h15v15H1zM6 1v15M11 1v15M1 6h15M1 11h15" />
            </svg>
          </View>
          <View>
            <svg width="18" height="17" fill="none" stroke="#444" strokeWidth="1.5">
              <path d="M1 1h16v15H1zM4.500 3.500h9v10h-9zM6.500 6h5M6.500 8.500h5M6.500 11h5" />
            </svg>
          </View>
          <View>
            <svg width="18" height="17" fill="none" stroke="#444" strokeWidth="1.5">
              <path d="M1 1h16v15H1zM1 10h11V1M6.500 1v9" />
            </svg>
          </View>
          <ZoomOut>
            <svg width="10" height="10" stroke="#444" strokeWidth="1.3">
              <path d="M0 5h10" />
            </svg>
          </ZoomOut>
          <ZoomTrack>
            <svg width="6" height="14">
              <rect width="6" height="14" y="1" fill="#666" />
            </svg>
          </ZoomTrack>
          <svg width="10" height="14" stroke="#444" strokeWidth="1.3">
            <path d="M0 8h10M5 3v10" />
          </svg>
          <ZoomText>100%</ZoomText>
        </StatusViews>
      </StatusBar>

      <Watermark>
        <MarkArabic dir="rtl">مستقل</MarkArabic>
        <MarkLatin>mostaql.com</MarkLatin>
      </Watermark>

      {/* red pen mark round the active sheet tab */}
      <Overlay width="140" height="84" viewBox="236 940 140 84">
        <path
          d="M254 1010c-6-4-8-14-8-24 0-15 1-24 9-30 6-6 10-6 16-6h26c12 0 18 4 28 7 9 4 18 3 25 8 5 6 9 14 10 21-1 9-4 14-6 20-3 6-7 7-13 7h-55c-8-1-11-4-16-4-7-1-9 2-16 1z"
          fill="none"
          stroke="#ea1c1c"
          strokeWidth="9"
          strokeLinejoin="round"
        />
      </Overlay>
    </Window>
  );
}

export default App;
